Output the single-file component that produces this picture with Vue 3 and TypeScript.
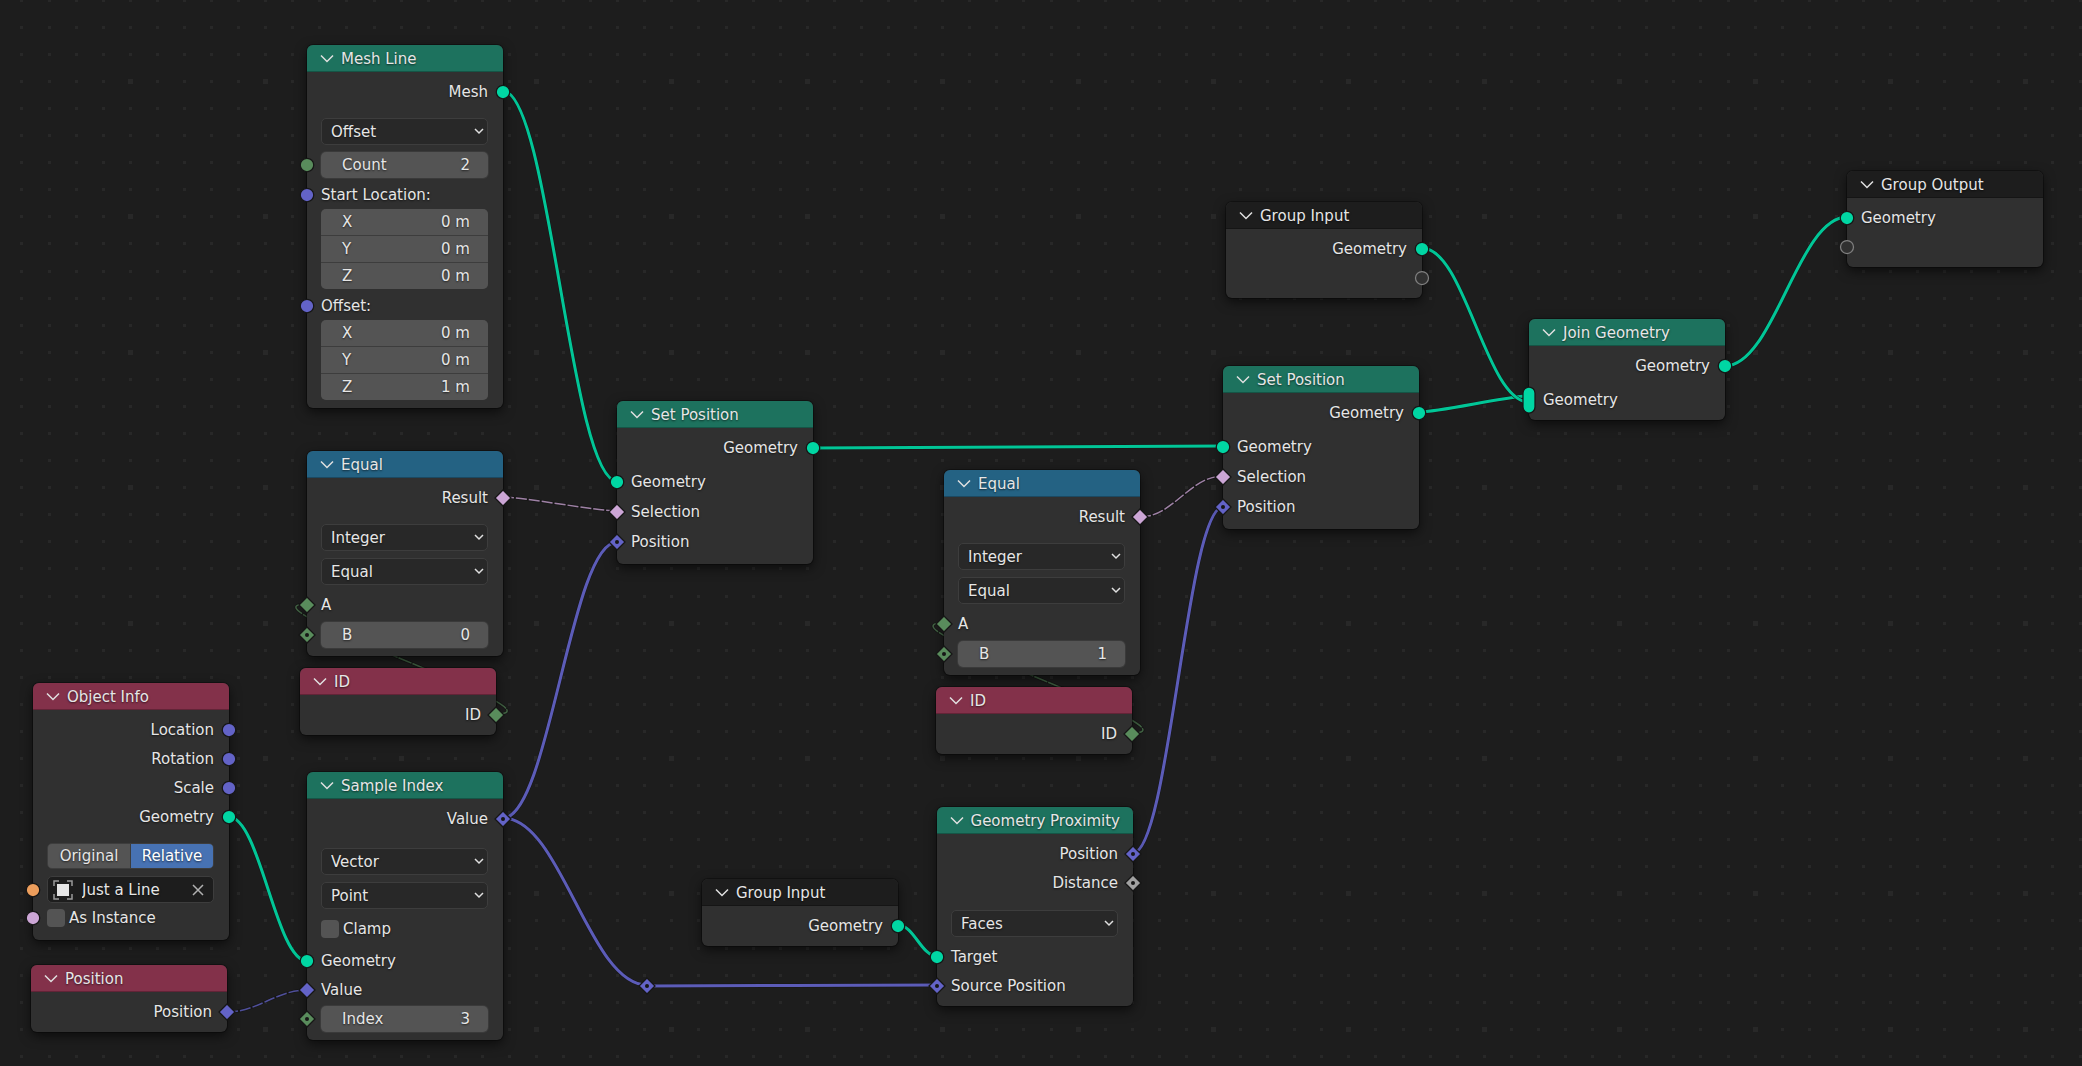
<script setup lang="ts">
import { computed, onBeforeUnmount, onMounted, ref } from 'vue'

type SocketKind = 'geometry' | 'vector' | 'int' | 'bool' | 'object' | 'float' | 'virtual'
type SocketShape = 'circle' | 'diamond' | 'dotted' | 'multi'

interface Socket {
  kind: SocketKind
  shape: SocketShape
}

interface Row {
  type: 'out' | 'in' | 'select' | 'number' | 'vector' | 'check' | 'toggle' | 'object'
  gap?: 1 | 2 | 3 | 5 | 7 | 12 | 13 | 15
  label?: string
  value?: string
  values?: string[]
  socket?: Socket
}

interface GraphNode {
  id: string
  title: string
  category: 'green' | 'blue' | 'red' | 'dark'
  x: number
  y: number
  roomy?: boolean
  rows: Row[]
}

interface Link {
  from: [number, number]
  to: [number, number]
  kind: SocketKind
  dashed?: boolean
}

const s = (kind: SocketKind, shape: SocketShape = 'circle'): Socket => ({ kind, shape })

const equalRows = (b: string): Row[] => [
  { type: 'out', label: 'Result', socket: s('bool', 'diamond') },
  { type: 'select', gap: 12, label: 'Data type', value: 'Integer' },
  { type: 'select', gap: 7, label: 'Operation', value: 'Equal' },
  { type: 'in', gap: 5, label: 'A', socket: s('int', 'diamond') },
  { type: 'number', gap: 3, label: 'B', value: b, socket: s('int', 'dotted') },
]

const setPositionRows: Row[] = [
  { type: 'out', label: 'Geometry', socket: s('geometry') },
  { type: 'in', gap: 5, label: 'Geometry', socket: s('geometry') },
  { type: 'in', gap: 1, label: 'Selection', socket: s('bool', 'diamond') },
  { type: 'in', gap: 1, label: 'Position', socket: s('vector', 'dotted') },
]

const nodes: GraphNode[] = [
  {
    id: 'mesh-line', title: 'Mesh Line', category: 'green', x: 307, y: 45, roomy: true,
    rows: [
      { type: 'out', label: 'Mesh', socket: s('geometry') },
      { type: 'select', gap: 12, label: 'Mode', value: 'Offset' },
      { type: 'number', gap: 7, label: 'Count', value: '2', socket: s('int') },
      { type: 'in', gap: 2, label: 'Start Location:', socket: s('vector') },
      { type: 'vector', values: ['0 m', '0 m', '0 m'] },
      { type: 'in', gap: 2, label: 'Offset:', socket: s('vector') },
      { type: 'vector', values: ['0 m', '0 m', '1 m'] },
    ],
  },
  { id: 'equal-0', title: 'Equal', category: 'blue', x: 307, y: 451, roomy: true, rows: equalRows('0') },
  {
    id: 'id-0', title: 'ID', category: 'red', x: 300, y: 668,
    rows: [{ type: 'out', label: 'ID', socket: s('int', 'diamond') }],
  },
  {
    id: 'object-info', title: 'Object Info', category: 'red', x: 33, y: 683, roomy: true,
    rows: [
      { type: 'out', label: 'Location', socket: s('vector') },
      { type: 'out', label: 'Rotation', socket: s('vector') },
      { type: 'out', label: 'Scale', socket: s('vector') },
      { type: 'out', label: 'Geometry', socket: s('geometry') },
      { type: 'toggle', gap: 12, label: 'Transform space', value: 'Relative', values: ['Original', 'Relative'] },
      { type: 'object', gap: 7, label: 'Object', value: 'Just a Line', socket: s('object') },
      { type: 'check', label: 'As Instance', socket: s('bool') },
    ],
  },
  {
    id: 'position', title: 'Position', category: 'red', x: 31, y: 965,
    rows: [{ type: 'out', label: 'Position', socket: s('vector', 'diamond') }],
  },
  {
    id: 'sample-index', title: 'Sample Index', category: 'green', x: 307, y: 772, roomy: true,
    rows: [
      { type: 'out', label: 'Value', socket: s('vector', 'dotted') },
      { type: 'select', gap: 15, label: 'Data type', value: 'Vector' },
      { type: 'select', gap: 7, label: 'Domain', value: 'Point' },
      { type: 'check', gap: 5, label: 'Clamp' },
      { type: 'in', gap: 3, label: 'Geometry', socket: s('geometry') },
      { type: 'in', label: 'Value', socket: s('vector', 'diamond') },
      { type: 'number', gap: 2, label: 'Index', value: '3', socket: s('int', 'dotted') },
    ],
  },
  { id: 'set-position-0', title: 'Set Position', category: 'green', x: 617, y: 401, roomy: true, rows: setPositionRows },
  { id: 'equal-1', title: 'Equal', category: 'blue', x: 944, y: 470, roomy: true, rows: equalRows('1') },
  {
    id: 'id-1', title: 'ID', category: 'red', x: 936, y: 687,
    rows: [{ type: 'out', label: 'ID', socket: s('int', 'diamond') }],
  },
  {
    id: 'group-input-1', title: 'Group Input', category: 'dark', x: 702, y: 879,
    rows: [{ type: 'out', label: 'Geometry', socket: s('geometry') }],
  },
  {
    id: 'proximity', title: 'Geometry Proximity', category: 'green', x: 937, y: 807,
    rows: [
      { type: 'out', label: 'Position', socket: s('vector', 'dotted') },
      { type: 'out', label: 'Distance', socket: s('float', 'dotted') },
      { type: 'select', gap: 13, label: 'Target geometry', value: 'Faces' },
      { type: 'in', gap: 5, label: 'Target', socket: s('geometry') },
      { type: 'in', label: 'Source Position', socket: s('vector', 'dotted') },
    ],
  },
  { id: 'set-position-1', title: 'Set Position', category: 'green', x: 1223, y: 366, roomy: true, rows: setPositionRows },
  {
    id: 'group-input-0', title: 'Group Input', category: 'dark', x: 1226, y: 202,
    rows: [
      { type: 'out', label: 'Geometry', socket: s('geometry') },
      { type: 'out', socket: s('virtual') },
    ],
  },
  {
    id: 'join', title: 'Join Geometry', category: 'green', x: 1529, y: 319,
    rows: [
      { type: 'out', label: 'Geometry', socket: s('geometry') },
      { type: 'in', gap: 5, label: 'Geometry', socket: s('geometry', 'multi') },
    ],
  },
  {
    id: 'group-output', title: 'Group Output', category: 'dark', x: 1847, y: 171,
    rows: [
      { type: 'in', label: 'Geometry', socket: s('geometry') },
      { type: 'in', socket: s('virtual') },
    ],
  },
]

const reroute = { x: 647, y: 985 }

const links: Link[] = [
  { from: [503, 91], to: [617, 481], kind: 'geometry' },
  { from: [813, 448], to: [1223, 446], kind: 'geometry' },
  { from: [1419, 412], to: [1529, 396], kind: 'geometry' },
  { from: [1422, 248], to: [1529, 402], kind: 'geometry' },
  { from: [1725, 366], to: [1847, 217], kind: 'geometry' },
  { from: [229, 817], to: [307, 961], kind: 'geometry' },
  { from: [898, 925], to: [937, 956], kind: 'geometry' },
  { from: [503, 818], to: [617, 542], kind: 'vector' },
  { from: [503, 818], to: [647, 985], kind: 'vector' },
  { from: [647, 986], to: [937, 985], kind: 'vector' },
  { from: [1133, 853], to: [1223, 507], kind: 'vector' },
  { from: [503, 497], to: [617, 511], kind: 'bool', dashed: true },
  { from: [1140, 517], to: [1223, 476], kind: 'bool', dashed: true },
  { from: [227, 1012], to: [307, 990], kind: 'vector', dashed: true },
  { from: [496, 714], to: [307, 604], kind: 'int', dashed: true },
  { from: [1132, 733], to: [944, 623], kind: 'int', dashed: true },
]

// Horizontal handles, shortened when the two ends are nearly level.
function linkPath({ from: [x1, y1], to: [x2, y2] }: Link): string {
  const dx = Math.abs(x2 - x1)
  const slope = Math.abs(y2 - y1) / dx
  const h = Math.round(dx * 0.4 * Math.min(1, slope * 3.5))
  return `M${x1} ${y1}C${x1 + h} ${y1} ${x2 - h} ${y2} ${x2} ${y2}`
}

// Background grid: a small dot on each step, a larger one on each fifth.
const size = ref({ w: window.innerWidth, h: window.innerHeight })
const measure = () => { size.value = { w: window.innerWidth, h: window.innerHeight } }
onMounted(() => window.addEventListener('resize', measure))
onBeforeUnmount(() => window.removeEventListener('resize', measure))

const STEP = 27.08
const ORIGIN = { x: 536 - STEP * 20, y: 81 - STEP * 5 }
const gridPath = computed(() => {
  let d = ''
  for (let i = 0; ORIGIN.x + i * STEP < size.value.w + STEP; i++) {
    for (let j = 0; ORIGIN.y + j * STEP < size.value.h + STEP; j++) {
      const r = i % 5 === 0 && j % 5 === 0 ? 2 : 1
      const x = Math.round(ORIGIN.x + i * STEP) - r
      const y = Math.round(ORIGIN.y + j * STEP) - r
      const w = r * 2 + 1
      d += `M${x} ${y}h${w}v${w}h-${w}z`
    }
  }
  return d
})
</script>

<template>
  <main class="canvas">
    <svg class="backdrop" aria-hidden="true">
      <path class="grid" :d="gridPath" />
      <g v-for="(link, i) in links" :key="i" :class="['link', link.kind, { dashed: link.dashed }]">
        <path class="link-edge" :d="linkPath(link)" />
        <path class="link-core" :d="linkPath(link)" />
      </g>
    </svg>

    <section
      v-for="node in nodes"
      :key="node.id"
      :class="['node', { roomy: node.roomy }]"
      :style="{ left: node.x + 'px', top: node.y + 'px' }"
    >
      <header :class="['head', node.category]">
        <button type="button" class="collapse" :aria-label="'Collapse ' + node.title">
          <svg width="14" height="10" viewBox="0 0 14 10"><path d="M1 1.500 7 7.500 13 1.500" /></svg>
        </button>
        <h2>{{ node.title }}</h2>
      </header>

      <div class="body">
        <div v-for="(row, i) in node.rows" :key="i" :class="['row', row.type, row.gap ? 'gap-' + row.gap : '']">
          <svg v-if="row.socket" :class="['socket', row.socket.kind]" width="18" height="28" viewBox="-9 -14 18 28">
            <circle v-if="row.socket.kind === 'virtual'" class="hollow" r="6.500" />
            <circle v-else-if="row.socket.shape === 'circle'" r="6.750" />
            <rect v-else-if="row.socket.shape === 'multi'" x="-6" y="-13" width="12" height="26" rx="6" />
            <path v-else d="M0-8 8 0 0 8-8 0z" />
            <circle v-if="row.socket.shape === 'dotted'" class="pip" r="2" />
          </svg>

          <span v-if="row.type === 'out' || row.type === 'in'" class="label">{{ row.label }}</span>

          <template v-else-if="row.type === 'select'">
            <select class="dropdown" :aria-label="row.label">
              <option>{{ row.value }}</option>
            </select>
            <svg class="arrow" width="10" height="7" viewBox="0 0 10 7"><path d="M1 1 5 5 9 1" /></svg>
          </template>

          <label v-else-if="row.type === 'number'" class="field single">
            <span>{{ row.label }}</span>
            <input type="text" inputmode="numeric" :value="row.value" />
          </label>

          <div v-else-if="row.type === 'vector'" class="stack">
            <label v-for="(v, k) in row.values" :key="k" class="field">
              <span>{{ 'XYZ'[k] }}</span>
              <input type="text" :value="v" />
            </label>
          </div>

          <label v-else-if="row.type === 'check'" class="check-label">
            <input type="checkbox" />
            <span>{{ row.label }}</span>
          </label>

          <div v-else-if="row.type === 'toggle'" class="toggle-group" role="group" :aria-label="row.label">
            <button
              v-for="option in row.values"
              :key="option"
              type="button"
              :class="{ active: option === row.value }"
              :aria-pressed="option === row.value"
            >{{ option }}</button>
          </div>

          <div v-else class="picker">
            <svg class="object-icon" width="20" height="20" viewBox="0 0 20 20">
              <path class="corners" d="M1 6V1H6M14 1H19V6M19 14V19H14M6 19H1V14" />
              <rect x="4" y="4" width="12" height="12" />
            </svg>
            <input type="text" :aria-label="row.label" :value="row.value" />
            <button type="button" aria-label="Clear object">
              <svg width="12" height="12" viewBox="0 0 12 12"><path d="M1 1 11 11M11 1 1 11" /></svg>
            </button>
          </div>
        </div>
      </div>
    </section>

    <svg
      class="reroute vector"
      width="18"
      height="18"
      viewBox="-9 -9 18 18"
      :style="{ left: reroute.x - 9 + 'px', top: reroute.y - 8 + 'px' }"
    >
      <path d="M0-8 8 0 0 8-8 0z" />
      <circle class="pip" r="2" />
    </svg>
  </main>
</template>

<style>
body {
  margin: 0;
  background: #1d1d1d;
}
</style>

<style scoped>
.canvas {
  position: relative;
  min-height: 100vh;
  overflow: hidden;
  background: #1d1d1d;
  color: #e6e6e6;
  font: 15px/20px "DejaVu Sans", sans-serif;
  text-shadow: 0 1px 2px rgba(0, 0, 0, 0.6);
}

.canvas * {
  box-sizing: border-box;
}

input,
select,
button {
  margin: 0;
  padding: 0;
  border: 0;
  background: none;
  color: inherit;
  font: inherit;
  text-shadow: inherit;
  appearance: none;
}

.geometry { --socket: #00d6a3; }
.vector { --socket: #6363c7; }
.int { --socket: #598c5c; }
.bool { --socket: #cca6d6; }
.object { --socket: #ed9e5c; }
.float { --socket: #a1a1a1; }

/* Backdrop */
.backdrop {
  position: absolute;
  inset: 0;
  width: 100%;
  height: 100%;
}

.grid {
  fill: #282828;
  shape-rendering: crispEdges;
}

.link path {
  fill: none;
}

.link-edge {
  stroke: #161616;
  stroke-width: 4;
}

.link-core {
  stroke: var(--socket);
  stroke-width: 3;
  opacity: 0.92;
}

.dashed .link-edge {
  stroke-width: 3;
}

.dashed .link-core {
  stroke-width: 1.5;
  stroke-dasharray: 11 2;
  opacity: 0.75;
}

.int.dashed .link-core {
  stroke-dasharray: 14 1;
  opacity: 0.65;
}

/* Nodes */
.node {
  position: absolute;
  width: 196px;
  border-radius: 6px;
  background: #303030;
  box-shadow: 0 0 0 1px rgba(0, 0, 0, 0.3), 0 4px 12px rgba(0, 0, 0, 0.6);
}

.head {
  display: flex;
  align-items: center;
  height: 27px;
  padding: 1px 13px 0;
  border-bottom: 1px solid rgba(0, 0, 0, 0.25);
  border-radius: 6px 6px 0 0;
}

.head.green { background: #1d725e; }
.head.blue { background: #246283; }
.head.red { background: #83314a; }
.head.dark { background: #1d1d1d; }

.head h2 {
  margin: 0;
  font-size: 15px;
  font-weight: 400;
  white-space: nowrap;
}

.collapse {
  display: flex;
  width: 21px;
}

.collapse path,
.arrow path,
.picker button path {
  fill: none;
  stroke: #e0e0e0;
  stroke-width: 1.5;
}

.body {
  display: flex;
  flex-direction: column;
  padding: 5px 15px 6px 14px;
}

.roomy .body {
  padding-bottom: 8px;
}

.row {
  position: relative;
  display: flex;
  align-items: center;
}

.gap-1 { margin-top: 1px; }
.gap-2 { margin-top: 2px; }
.gap-3 { margin-top: 3px; }
.gap-5 { margin-top: 5px; }
.gap-7 { margin-top: 7px; }
.gap-12 { margin-top: 12px; }
.gap-13 { margin-top: 13px; }
.gap-15 { margin-top: 15px; }

.in,
.out,
.check {
  height: 29px;
}

.out {
  justify-content: flex-end;
}

/* Sockets sit over the edge of the node */
.socket {
  position: absolute;
  left: -23px;
}

.out .socket {
  left: auto;
  right: -24px;
}

.socket circle,
.socket rect,
.socket path,
.reroute path {
  fill: var(--socket);
  stroke: #161616;
  stroke-width: 1.25;
}

.socket .hollow {
  fill: #303030;
  stroke: #808080;
  stroke-width: 1.25;
}

.socket .pip,
.reroute .pip {
  fill: #161616;
  stroke: none;
}

.reroute {
  position: absolute;
}

/* Controls */
.dropdown {
  width: 100%;
  height: 27px;
  padding: 0 26px 0 9px;
  border: 1px solid #3d3d3d;
  border-radius: 5px;
  background: #282828;
}

.arrow {
  position: absolute;
  right: 4px;
}

.field {
  display: flex;
  align-items: center;
  width: 100%;
  height: 26px;
  padding: 0 18px 0 21px;
  background: #545454;
}

.field input {
  flex: 1;
  min-width: 0;
  text-align: right;
}

.single {
  border-radius: 5px;
  box-shadow: 0 0 0 1px #3a3a3a;
}

.stack {
  display: flex;
  flex-direction: column;
  gap: 1px;
  width: 100%;
  overflow: hidden;
  border-radius: 5px;
  background: #3d3d3d;
}

.check-label {
  display: flex;
  align-items: center;
  gap: 4px;
}

.check-label input {
  width: 18px;
  height: 18px;
  border-radius: 4px;
  background: #545454;
}

.toggle-group {
  display: flex;
  gap: 1px;
  width: 100%;
  overflow: hidden;
  border: 1px solid #3d3d3d;
  border-radius: 5px;
  background: #3d3d3d;
}

.toggle-group button {
  flex: 1;
  height: 24px;
  background: #545454;
}

.toggle-group .active {
  background: #4772b3;
  color: #ffffff;
}

.picker {
  display: flex;
  align-items: center;
  width: 100%;
  height: 27px;
  padding: 0 9px 0 5px;
  border: 1px solid #3d3d3d;
  border-radius: 5px;
  background: #1d1d1d;
}

.picker input {
  flex: 1;
  min-width: 0;
  padding-left: 9px;
}

.picker button {
  display: flex;
}

.picker button path {
  stroke: #b0b0b0;
}

.object-icon rect {
  fill: #e6e6e6;
}

.object-icon .corners {
  fill: none;
  stroke: #9a9a9a;
  stroke-width: 1.5;
}
</style>
